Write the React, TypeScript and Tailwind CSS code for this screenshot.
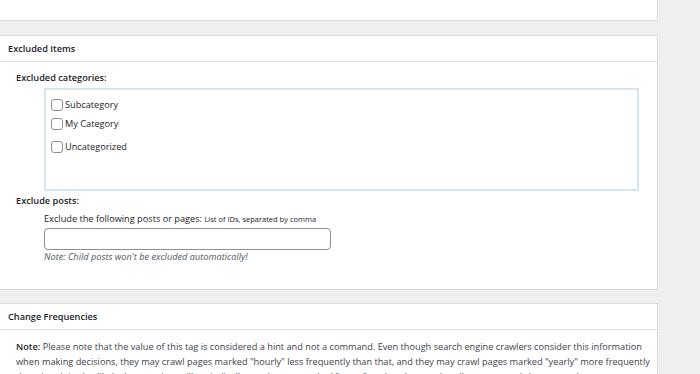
export default function App() {
  return (
    <div
      className="w-[700px] h-[374px] overflow-hidden bg-[#f0f0f1] text-[#1d2327] text-[9.2px] leading-[18px]"
      style={{ fontFamily: '"Open Sans", "Noto Sans", sans-serif' }}
    >
      {/* previous panel, mostly scrolled away */}
      <div className="w-[658px] h-[21px] bg-white border-r border-b border-[#dcdcde]" />

      {/* Excluded Items */}
      <div className="w-[658px] mt-[14px] bg-white border-r border-y border-[#dcdcde]">
        <div className="h-[26px] flex items-center pl-[8px] border-b border-[#dcdcde] font-semibold">
          Excluded Items
        </div>
        <div className="h-[227px] pl-[16px] pt-[7px]">
          <p className="font-semibold">Excluded categories:</p>
          <div className="ml-[28px] mt-[1px] w-[595px] h-[103px] border-2 border-[#d7e5f1] pl-[5px] pt-[5px]">
            <CheckRow label="Subcategory" />
            <CheckRow label="My Category" />
            <CheckRow label="Uncategorized" className="mt-[4px]" />
          </div>
          <p className="font-semibold mt-[1px]">Exclude posts:</p>
          <div className="ml-[28px]">
            <p className="leading-[17px]">
              Exclude the following posts or pages:{' '}
              <span className="text-[7.5px]">List of IDs, separated by comma</span>
            </p>
            <input
              type="text"
              className="block w-[287px] h-[22px] border border-[#8c8f94] rounded-[4px] bg-white"
            />
            <p className="italic text-[#50575e] mt-[-2px]">Note: Child posts won't be excluded automatically!</p>
          </div>
        </div>
      </div>

      {/* Change Frequencies */}
      <div className="w-[658px] mt-[13px] bg-white border-r border-t border-[#dcdcde]">
        <div className="h-[26px] flex items-center pl-[8px] border-b border-[#dcdcde] font-semibold">
          Change Frequencies
        </div>
        <div className="pl-[16px] pr-[4px] pt-[9px] leading-[15px] text-[#3c434a]">
          <p>
            <span className="font-semibold text-[#1d2327]">Note:</span> Please note that the value of this tag is
            considered a hint and not a command. Even though search engine crawlers consider this information when
            making decisions, they may crawl pages marked "hourly" less frequently than that, and they may crawl pages
            marked "yearly" more frequently than that. It is also likely that crawlers will periodically crawl pages
            marked "never" so that they can handle unexpected changes to those pages.
          </p>
        </div>
      </div>
    </div>
  )
}

function CheckRow({ label, className = '' }: { label: string; className?: string }) {
  return (
    <label className={`flex items-center h-[19px] ${className}`}>
      <span className="w-[12px] h-[12px] border border-[#8c8f94] rounded-[3px] bg-white mr-[2px]" />
      <span>{label}</span>
    </label>
  )
}
